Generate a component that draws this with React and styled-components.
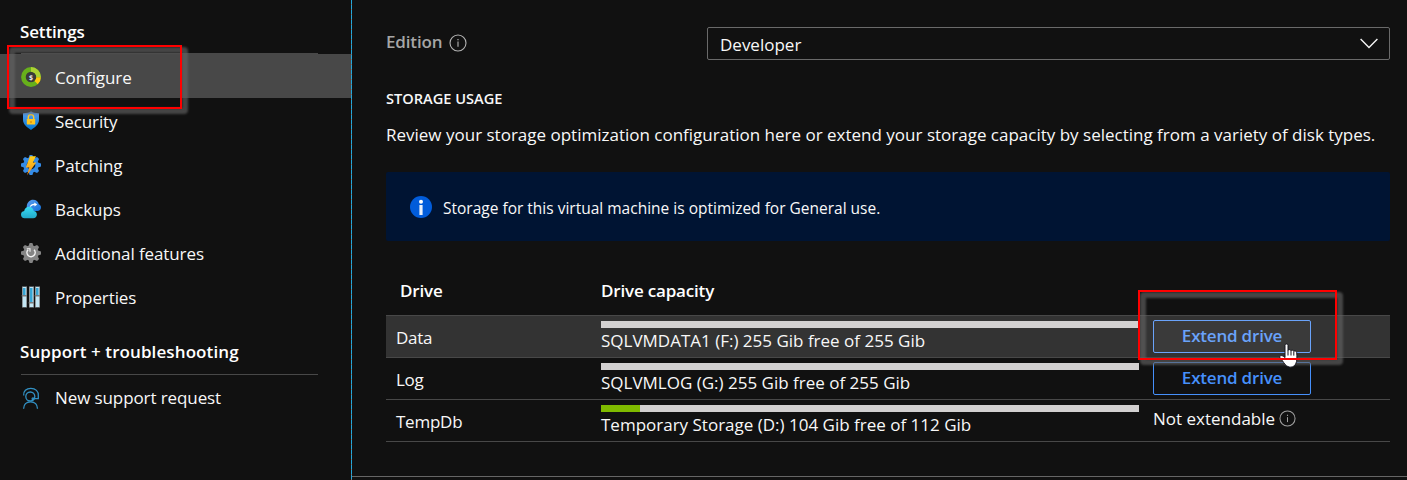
import React from "react";
import styled, { createGlobalStyle } from "styled-components";

const Global = createGlobalStyle`
  * { box-sizing: border-box; }
  body {
    margin: 0;
    background: #111111;
    color: #f8f8f8;
    font: 400 17px "Open Sans", "Segoe UI", sans-serif;
    overflow: hidden;
  }
`;

const Page = styled.div`
  position: relative;
  display: flex;
  width: 1407px;
  height: 480px;
  background: #111111;
`;

/* ---------- Sidebar ---------- */

const Sidebar = styled.nav`
  display: flex;
  flex-direction: column;
  width: 351px;
`;

const Divider = styled.div`
  width: 1px;
  background: repeating-linear-gradient(#23a8dc 0 4px, #77767a 4px 5px);
`;

const GroupTitle = styled.h2`
  display: flex;
  align-items: center;
  width: 297px;
  height: ${(p) => p.$height}px;
  margin: 0 0 0 21px;
  padding-top: 10px;
  border-bottom: 1px solid #484848;
  font-size: 17px;
  font-weight: 600;
  letter-spacing: ${(p) => p.$spacing};
  text-indent: -1px;
  color: #ffffff;
`;

const NavItem = styled.div`
  display: flex;
  align-items: center;
  gap: 14px;
  height: 44px;
  padding-left: 21px;
  background: ${(p) => (p.$active ? "#484848" : "transparent")};

  svg {
    width: 20px;
    height: 22px;
    margin-top: 2px;
    flex: none;
  }
`;

const NavLabel = styled.span`
  padding-top: ${(p) => (p.$raised ? 1 : 3)}px;
  letter-spacing: -0.1px;
  white-space: nowrap;
`;

/* ---------- Main panel ---------- */

const Main = styled.main`
  display: flex;
  flex-direction: column;
  flex: 1;
`;

const Content = styled.div`
  padding: 27px 17px 0 34px;
`;

const Field = styled.div`
  display: flex;
  height: 33px;
`;

const FieldLabel = styled.label`
  display: flex;
  align-items: center;
  gap: 7px;
  width: 321px;
  padding-bottom: 1px;
  color: #a6a6a6;
  font-weight: 600;
  letter-spacing: -0.15px;

  span { padding-bottom: 3px; }
`;

const Select = styled.div`
  display: flex;
  align-items: center;
  justify-content: space-between;
  flex: 1;
  padding: 0 11px 0 12px;
  border: 1px solid #6a6a6a;
  border-radius: 2px;

  span { padding-top: 2px; }
`;

const SectionTitle = styled.h3`
  margin: 28px 0 15px;
  font-size: 14.6px;
  line-height: 20px;
  font-weight: 600;
`;

const Intro = styled.p`
  margin: 0 0 25px;
  line-height: 24px;
  white-space: nowrap;
`;

const Banner = styled.div`
  display: flex;
  align-items: center;
  gap: 11px;
  height: 69px;
  margin-bottom: 34px;
  padding: 1px 0 0 24px;
  border-radius: 2px;
  background: #001433;
  font-size: 15.5px;

  span { padding-top: 2px; }
`;

const Row = styled.div`
  display: grid;
  grid-template-columns: 215px 552px 1fr;
  height: 42px;
  border-bottom: 1px solid #484848;
  background: ${(p) => (p.$hover ? "#333333" : "transparent")};
`;

const HeaderRow = styled(Row)`
  height: 41px;
  font-weight: 600;
  line-height: 31px;
  letter-spacing: -0.18px;
  color: #ffffff;
`;

const HeaderCell = styled.div`
  padding-left: ${(p) => (p.$indent ? 14 : 0)}px;
`;

const NameCell = styled.div`
  padding-left: 10px;
  line-height: 43px;
  letter-spacing: -0.25px;
`;

const CapacityCell = styled.div`
  padding-top: 5px;
  line-height: 25px;
  white-space: nowrap;
`;

const Bar = styled.div`
  width: 538px;
  height: 7px;
  background: #d2d0d0;
`;

const BarFill = styled.div`
  height: 7px;
  background: #7fba00;
`;

const ActionCell = styled.div`
  display: flex;
  align-items: flex-start;
  gap: 4px;
  padding-top: 4px;
  line-height: 29px;

  svg { margin-top: 6px; }
`;

const ExtendButton = styled.button`
  width: 158px;
  height: 33px;
  padding: 0 0 2px;
  border: 1px solid ${(p) => (p.$hover ? "#6aa3fa" : "#4690fb")};
  border-radius: 2px;
  background: ${(p) => (p.$hover ? "#3a3a3a" : "transparent")};
  color: ${(p) => (p.$hover ? "#6aa3fa" : "#4690fb")};
  font: 600 17px/29px "Open Sans", sans-serif;
  letter-spacing: -0.2px;
`;

const Footer = styled.footer`
  margin-top: 34px;
  border-top: 1px solid #666666;
`;

/* ---------- Annotations over the page ---------- */

const Highlight = styled.div`
  position: absolute;
  left: ${(p) => p.$x}px;
  top: ${(p) => p.$y}px;
  width: ${(p) => p.$w}px;
  height: ${(p) => p.$h}px;

  &::before {
    content: "";
    position: absolute;
    inset: 2px -6px -5px 2px;
    border: 6px solid rgba(98, 98, 98, 0.65);
    border-radius: 4px;
    filter: blur(1px);
  }

  &::after {
    content: "";
    position: absolute;
    inset: 0;
    border: 2px solid #ff0000;
  }
`;

const Pointer = styled.svg`
  position: absolute;
  left: 1279px;
  top: 343px;
  width: 20px;
  height: 26px;
`;

/* ---------- Icons ---------- */

const InfoOutline = ({ size, color = "#b4b4b4" }) => (
  <svg width={size} height={size} viewBox="0 0 18 18" fill="none" stroke={color}>
    <circle cx="9" cy="9" r="8" strokeWidth="1.1" />
    <path d="M9 7.6v5.2" strokeWidth="1.1" />
    <path d="M9 5v1.3" strokeWidth="1.2" />
  </svg>
);

const InfoFilled = () => (
  <svg width="22" height="22" viewBox="0 0 22 22">
    <circle cx="11" cy="11" r="11" fill="#015cda" />
    <circle cx="11" cy="5.7" r="2" fill="#fff" />
    <rect x="9.4" y="9" width="3.2" height="10" fill="#e9f0fb" />
  </svg>
);

const Chevron = () => (
  <svg width="18" height="11" viewBox="0 0 18 11" fill="none" stroke="#f4f4f4" strokeWidth="1.4">
    <path d="M.6 1 9 9.6 17.4 1" />
  </svg>
);

const ConfigureIcon = () => (
  <svg viewBox="0 0 20 22">
    <circle cx="10" cy="11" r="5.5" fill="#3a3a3a" />
    <circle cx="10" cy="11" r="7.6" fill="none" stroke="#67b01b" strokeWidth="4.6" />
    <path d="M10 1.1a9.9 9.9 0 0 1 9.9 9.9h-4.6A5.3 5.3 0 0 0 10 5.7z" fill="#acd233" />
    <path d="M19.9 11.2a9.9 9.9 0 0 1-3.2 7.1l-3.1-3.4a5.3 5.3 0 0 0 1.700-3.700z" fill="#ffc80f" />
    <text x="10" y="13.600" fontSize="7" fontWeight="700" fill="#e6e6e6" textAnchor="middle" fontFamily="Open Sans, sans-serif">$</text>
  </svg>
);

const SecurityIcon = () => (
  <svg viewBox="0 0 20 22">
    <defs>
      <linearGradient id="shield" x1="0" y1="0" x2="0" y2="1">
        <stop offset="0" stopColor="#5ea0ef" />
        <stop offset="1" stopColor="#0078d4" />
      </linearGradient>
    </defs>
    <path d="M10 1.2c2 1.6 4.8 1.9 8 2v6.6c0 4.8-4.4 8-8 10.200-3.600-2.200-8-5.400-8-10.200V3.200c3.200-.1 6-.4 8-2z" fill="url(#shield)" />
    <path d="M7.300 9.500V7.300a2.700 2.700 0 0 1 5.400 0v2.200" fill="none" stroke="#ffca2a" strokeWidth="1.400" />
    <rect x="5.800" y="9" width="8.400" height="5.400" rx=".6" fill="#ffc61e" />
    <path d="M10 11v2" stroke="#d98a08" strokeWidth="1.300" />
  </svg>
);

const Gear = ({ fill }) => (
  <g fill={fill}>
    <circle cx="10" cy="11" r="7.6" />
    {[0, 45, 90, 135].map((a) => (
      <path key={a} d="M8.6 1h2.8l1.100 3v14l-1.100 3H8.600l-1.100-3V4z" transform={`rotate(${a} 10 11)`} />
    ))}
  </g>
);

const PatchingIcon = () => (
  <svg viewBox="0 0 20 22">
    <defs>
      <linearGradient id="bolt" x1="0" y1="0" x2="0" y2="1">
        <stop offset="0" stopColor="#ffd21c" />
        <stop offset="1" stopColor="#f78d1e" />
      </linearGradient>
    </defs>
    <Gear fill="#348be6" />
    <circle cx="10" cy="11" r="4.3" fill="#10202f" />
    <path d="M9 2.200h6l-3.200 6.400h3.400L6 21.200l2.300-7.800H4.800z" fill="url(#bolt)" />
  </svg>
);

const BackupsIcon = () => (
  <svg viewBox="0 0 20 22">
    <defs>
      <linearGradient id="front" x1="0" y1="0" x2="0" y2="1">
        <stop offset="0" stopColor="#38dcf5" />
        <stop offset="1" stopColor="#22a9c9" />
      </linearGradient>
      <linearGradient id="back" x1="0" y1="0" x2="1" y2="1">
        <stop offset="0" stopColor="#5ea0ef" />
        <stop offset="1" stopColor="#0f6fda" />
      </linearGradient>
    </defs>
    <path d="M9.500 12.900a4.300 4.300 0 0 1-3.800-4.500C6.100 4.100 9 1.700 12 1.700c3.200 0 5.400 2.100 5.800 4.500 1.400.5 2.200 1.600 2.200 3.200 0 2.100-1.600 3.500-3.600 3.500z" fill="url(#back)" />
    <path d="M8.600 8.600c1-2 2.600-3 4.700-2.900V4.500L16.200 6.400l-2.700 2.200v-1.400c-1.700-.2-2.900.4-3.900 1.600z" fill="#fff" />
    <path d="M3.700 20.200A3.700 3.700 0 0 1 0 16.500c0-2 1.300-3.200 3.200-3.500.4-2.700 2.300-4.300 4.700-4.300 2.600 0 4.500 1.700 4.800 4.300 1.900.2 3.200 1.600 3.200 3.400 0 2.100-1.600 3.800-3.800 3.800z" fill="url(#front)" />
  </svg>
);

const FeaturesIcon = () => (
  <svg viewBox="0 0 20 22">
    <Gear fill="#858585" />
    <path d="M7.100 7.700a4.100 4.100 0 1 0 6 .1" fill="none" stroke="#f3f3f3" strokeWidth="1.500" />
    <path d="M5.800 6.800h3.200v3" fill="none" stroke="#f3f3f3" strokeWidth="1.100" />
  </svg>
);

const PropertiesIcon = () => (
  <svg viewBox="0 0 20 22">
    {[[1, 9], [8, 16], [14, 9]].map(([x, y]) => (
      <g key={x}>
        <rect x={x} y=".5" width="5" height="21" fill="#8f989d" />
        <rect x={x + 1} y="1" width="3" height="20" fill="#c3e6f4" />
        <rect x={x + 1} y="2" width="2.5" height={y - 2} fill="#38a6d5" />
        <rect x={x - 0.3} y={y} width="5.3" height="1.5" fill="#7b7b7b" />
      </g>
    ))}
  </svg>
);

const SupportIcon = () => (
  <svg viewBox="0 0 20 22" fill="none" stroke="#3291c4" strokeWidth="1.3">
    <path d="M2.700 8.500C2 4.300 5.500 1.300 9.800 1.300c4.800 0 7.800 3.200 7.500 7.200v3.200h-5.200" />
    <circle cx="9.300" cy="9.500" r="4.500" />
    <path d="M2.600 21.800c.2-4.600 3.200-6.900 7-6.900s6.700 2.300 6.900 6.900" />
    <circle cx="12" cy="11.700" r=".9" />
  </svg>
);

const settings = [
  ["Configure", ConfigureIcon],
  ["Security", SecurityIcon],
  ["Patching", PatchingIcon],
  ["Backups", BackupsIcon],
  ["Additional features", FeaturesIcon],
  ["Properties", PropertiesIcon],
];

const drives = [
  { name: "Data", capacity: "SQLVMDATA1 (F:) 255 Gib free of 255 Gib", used: 0, hover: true },
  { name: "Log", capacity: "SQLVMLOG (G:) 255 Gib free of 255 Gib", used: 0 },
  { name: "TempDb", capacity: "Temporary Storage (D:) 104 Gib free of 112 Gib", used: 7.2, fixed: true },
];

export default function App() {
  return (
    <>
      <Global />
      <Page>
        <Sidebar>
          <GroupTitle $height={54} $spacing="-0.15px">Settings</GroupTitle>
          {settings.map(([label, Icon], i) => (
            <NavItem key={label} $active={i === 0}>
              <Icon />
              <NavLabel>{label}</NavLabel>
            </NavItem>
          ))}
          <GroupTitle $height={57} $spacing="0.1px">Support + troubleshooting</GroupTitle>
          <NavItem>
            <SupportIcon />
            <NavLabel $raised>New support request</NavLabel>
          </NavItem>
        </Sidebar>
        <Divider />
        <Main>
          <Content>
            <Field>
              <FieldLabel>
                <span>Edition</span>
                <InfoOutline size={18} />
              </FieldLabel>
              <Select>
                <span>Developer</span>
                <Chevron />
              </Select>
            </Field>
            <SectionTitle>STORAGE USAGE</SectionTitle>
            <Intro>
              Review your storage optimization configuration here or extend your storage capacity by selecting from a variety of disk types.
            </Intro>
            <Banner>
              <InfoFilled />
              <span>Storage for this virtual machine is optimized for General use.</span>
            </Banner>
            <HeaderRow>
              <HeaderCell $indent>Drive</HeaderCell>
              <HeaderCell>Drive capacity</HeaderCell>
            </HeaderRow>
            {drives.map((d) => (
              <Row key={d.name} $hover={d.hover}>
                <NameCell>{d.name}</NameCell>
                <CapacityCell>
                  <Bar>
                    <BarFill style={{ width: `${d.used}%` }} />
                  </Bar>
                  {d.capacity}
                </CapacityCell>
                <ActionCell>
                  {d.fixed ? (
                    <>
                      Not extendable
                      <InfoOutline size={17} color="#a0a0a0" />
                    </>
                  ) : (
                    <ExtendButton $hover={d.hover}>Extend drive</ExtendButton>
                  )}
                </ActionCell>
              </Row>
            ))}
          </Content>
          <Footer />
        </Main>
        <Highlight $x={7} $y={45} $w={175} $h={64} />
        <Highlight $x={1138} $y={290} $w={199} $h={70} />
        <Pointer viewBox="0 0 20 26">
          <path
            d="M6 2.200C6 .600 9 .600 9 2.200v5.300c.5-1.300 2.700-1.100 3 .3.500-1 2.500-.8 2.800.6.700-.8 2.800-.4 2.900 1.200.3 4.400.6 8.200-1 11.400-1.500 2.800-4.300 3.500-6.600 3-3.600-.8-5-4-6.800-6.500-1-1.400-2.800-2.500-2.500-3.900.5-1.700 3-1.100 5.200 1z"
            fill="#ffffff"
            stroke="#15151f"
            strokeWidth="1"
          />
          <path d="M9 7.500v5M12 8v4.500M14.800 8.600v4" stroke="#15151f" strokeWidth="1" />
          <path d="M0 15h20" stroke="#ff0000" strokeWidth="2" transform="translate(0 1)" />
        </Pointer>
      </Page>
    </>
  );
}
